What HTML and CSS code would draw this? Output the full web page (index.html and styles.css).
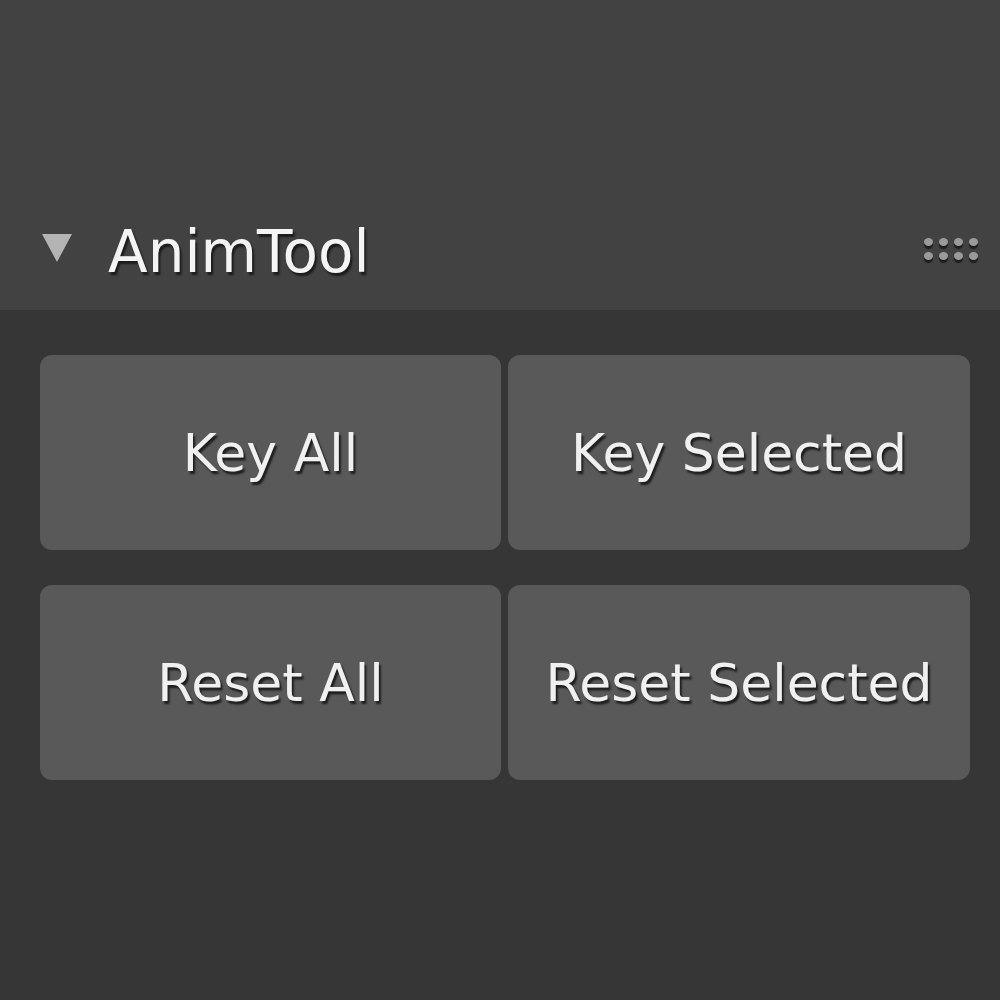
FILE: index.html
```html
<!DOCTYPE html>
<html lang="en">
<head>
    <meta charset="UTF-8">
    <title>AnimTool</title>
    <link rel="stylesheet" href="styles.css">
</head>
<body>
    <div class="panel">
        <div class="panel-header">
            <span class="arrow"></span>
            <span class="title">AnimTool</span>
            <div class="grip">
                <i></i><i></i><i></i><i></i>
                <i></i><i></i><i></i><i></i>
            </div>
        </div>
        <div class="panel-body">
            <button class="op">Key All</button>
            <button class="op">Key Selected</button>
            <button class="op">Reset All</button>
            <button class="op">Reset Selected</button>
        </div>
    </div>
</body>
</html>
```

FILE: styles.css
```css
* {
    margin: 0;
    padding: 0;
    box-sizing: border-box;
}

body {
    background: #363636;
    font-family: 'DejaVu Sans', sans-serif;
    width: 1000px;
    height: 1000px;
    overflow: hidden;
}

.panel {
    width: 1000px;
    height: 1000px;
}

.panel-header {
    height: 310px;
    background: #424242;
    display: flex;
    align-items: center;
    padding: 194px 22px 0 42px;
}

.arrow {
    width: 0;
    height: 0;
    border-left: 15px solid transparent;
    border-right: 15px solid transparent;
    border-top: 28px solid #b4b4b4;
    margin-right: 36px;
    margin-top: -8px;
}

.title {
    flex: 1;
    color: #f4f4f4;
    font-size: 58px;
    text-shadow: 2px 3px 2px #1c1c1c;
}

.grip {
    display: grid;
    grid-template-columns: repeat(4, 9px);
    gap: 6px 6px;
    margin-top: -6px;
}

.grip i {
    width: 9px;
    height: 8px;
    border-radius: 50%;
    background: #9a9a9a;
    box-shadow: 0 3px 1px #1e1e1e;
}

.panel-body {
    display: grid;
    grid-template-columns: 461px 462px;
    grid-auto-rows: 195px;
    gap: 35px 7px;
    padding: 45px 0 0 40px;
}

.op {
    background: #595959;
    border: none;
    border-radius: 12px;
    color: #f0f0f0;
    font-family: 'DejaVu Sans', sans-serif;
    font-size: 52px;
    text-shadow: 2px 3px 2px #1e1e1e;
}
```
